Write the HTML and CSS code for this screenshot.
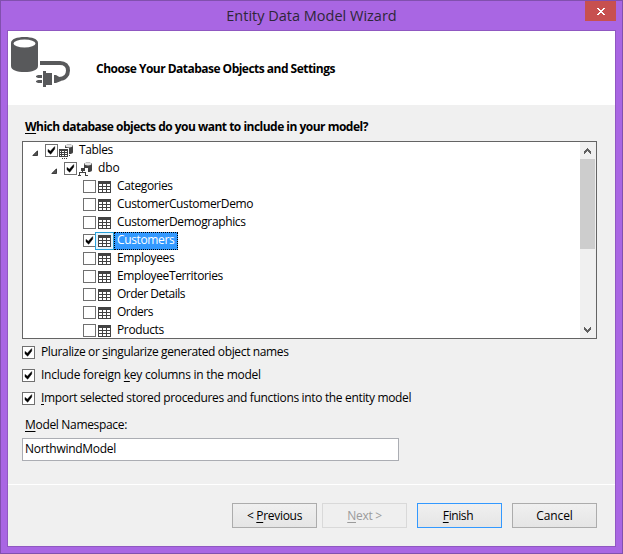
FILE: index.html
```html
<!DOCTYPE html>
<html lang="en">
<head>
<meta charset="utf-8">
<title>Entity Data Model Wizard</title>
<link rel="stylesheet" href="styles.css">
</head>
<body>
<svg class="defs" width="0" height="0" aria-hidden="true">
  <symbol id="check" viewBox="0 0 13 13"><path d="M3 5.4 5.4 7.2 9.7 2.6V5L5.7 10.2 3 7.8Z" fill="#000" stroke="#000" stroke-width=".5"/></symbol>
  <symbol id="arrow" viewBox="0 0 6 6"><path d="M5.5.8V5.5H.8Z" fill="#555" stroke="#222" stroke-width=".8"/></symbol>
  <symbol id="table" viewBox="0 0 13 12" shape-rendering="crispEdges"><path fill="#424242" d="M0 0h13v12H0z"/><path fill="#fff" d="M1 3h3v2H1zM5 3h3v2H5zM9 3h3v2H9zM1 6h3v2H1zM5 6h3v2H5zM9 6h3v2H9zM1 9h3v2H1zM5 9h3v2H5zM9 9h3v2H9z"/></symbol>
</svg>
<div class="window">
  <header class="titlebar">
    <h1 class="title">Entity Data Model Wizard</h1>
    <button class="close" aria-label="Close"><svg width="8" height="7" viewBox="0 0 8 7" shape-rendering="crispEdges"><path fill="#fff" d="M0 0h2v1H0zM6 0h2v1H6zM1 1h2v1H1zM5 1h2v1H5zM2 2h4v1H2zM3 3h2v1H3zM2 4h4v1H2zM1 5h2v1H1zM5 5h2v1H5zM0 6h2v1H0zM6 6h2v1H6z"/></svg></button>
  </header>
  <main class="client">
    <section class="banner">
      <svg class="logo" width="60" height="52" viewBox="0 0 60 52">
        <path fill="#58595b" d="M0 6C0 2 6 0 13.500 0S27 2 27 6v23c0 4-6 6-13.500 6S0 33 0 29z"/>
        <ellipse cx="13.500" cy="6.500" rx="11" ry="4" fill="#fff"/>
        <path fill="none" stroke="#58595b" stroke-width="4" d="M29 26h20c5 0 8 3 8 7.500S54 42 48 42h-3"/>
        <path fill="#58595b" d="M32 34h3v2h6v12h-6v2h-3zM43 38h2l5 3v3l-5 2h-2zM27 38h4v3h-4l-2-1v-1zM27 43h4v3h-4l-2-1v-1z"/>
      </svg>
      <h2 class="heading">Choose Your Database Objects and Settings</h2>
    </section>
    <section class="content">
      <p class="question"><u>W</u>hich database objects do you want to include in your model?</p>
      <div class="tree">
        <ul class="rows">
          <li class="row level-0"><svg class="arrow"><use href="#arrow"/></svg><span class="box"><svg><use href="#check"/></svg></span><svg class="group-icon" width="15" height="15" viewBox="0 0 15 15"><path fill="#424242" d="M6 2c0-2 8-2 8 0v6c0 2-3 2-4 2V4H6z"/><ellipse cx="10" cy="2" rx="3.500" ry="1.400" fill="#e4e4e4"/><g shape-rendering="crispEdges"><path fill="#424242" d="M0 5h9v8H0z"/><path fill="#fff" d="M1 7h1v1H1zM3 7h2v1H3zM6 7h2v1H6zM1 9h1v1H1zM3 9h2v1H3zM6 9h2v1H6zM1 11h1v1H1zM3 11h2v1H3zM6 11h2v1H6z"/><path fill="#424242" d="M3 14h1v1H3zM5 14h1v1H5zM7 14h1v1H7zM10 11h1v1h-1z"/></g></svg><span class="name">Tables</span></li>
          <li class="row level-1"><svg class="arrow"><use href="#arrow"/></svg><span class="box"><svg><use href="#check"/></svg></span><svg class="group-icon" width="15" height="15" viewBox="0 0 15 15"><path fill="#424242" d="M6 2c0-2 8-2 8 0v6c0 2-3 2-4 2V6H6z"/><ellipse cx="10" cy="2" rx="3.500" ry="1.400" fill="#e4e4e4"/><path shape-rendering="crispEdges" fill="#424242" d="M3 6h4v3H5v1h3v3h2v1H7v-3H2v2h1v1H0v-1h1v-3h3V9H3z"/></svg><span class="name w-dbo">dbo</span></li>
          <li class="row level-2"><span class="box"></span><svg class="table"><use href="#table"/></svg><span class="name">Categories</span></li>
          <li class="row level-2"><span class="box"></span><svg class="table"><use href="#table"/></svg><span class="name">CustomerCustomerDemo</span></li>
          <li class="row level-2"><span class="box"></span><svg class="table"><use href="#table"/></svg><span class="name">CustomerDemographics</span></li>
          <li class="row level-2 selected"><span class="box"><svg><use href="#check"/></svg></span><svg class="table"><use href="#table"/></svg><span class="name">Customers</span></li>
          <li class="row level-2"><span class="box"></span><svg class="table"><use href="#table"/></svg><span class="name">Employees</span></li>
          <li class="row level-2"><span class="box"></span><svg class="table"><use href="#table"/></svg><span class="name">EmployeeTerritories</span></li>
          <li class="row level-2"><span class="box"></span><svg class="table"><use href="#table"/></svg><span class="name w-tight">Order Details</span></li>
          <li class="row level-2"><span class="box"></span><svg class="table"><use href="#table"/></svg><span class="name w-tight">Orders</span></li>
          <li class="row level-2"><span class="box"></span><svg class="table"><use href="#table"/></svg><span class="name">Products</span></li>
        </ul>
        <div class="scrollbar">
          <svg class="chevron" viewBox="0 0 7 6" shape-rendering="crispEdges"><path fill="#606060" d="M3 0h1v1h1v1h1v1h1v3H6V5H5V4H4V3H3v1H2v1H1v1H0V3h1V2h1V1h1z"/></svg>
          <div class="thumb"></div>
          <svg class="chevron down" viewBox="0 0 7 6" shape-rendering="crispEdges"><path fill="#606060" d="M3 6h1V5h1V4h1V3h1V0H6v1H5v1H4v1H3V2H2V1H1V0H0v3h1v1h1v1h1z"/></svg>
        </div>
      </div>
      <div class="options">
        <div class="option"><span class="box"><svg><use href="#check"/></svg></span><span class="w-plural">Pluralize or <u>s</u>ingularize generated object names</span></div>
        <div class="option"><span class="box"><svg><use href="#check"/></svg></span><span class="w-include">Include foreign <u>k</u>ey columns in the model</span></div>
        <div class="option"><span class="box"><svg><use href="#check"/></svg></span><span class="w-import"><u>I</u>mport selected stored procedures and functions into the entity model</span></div>
      </div>
      <div class="namespace-label"><u>M</u>odel Namespace:</div>
      <div class="field">NorthwindModel</div>
    </section>
    <footer class="footer">
      <button class="button">&lt; <u>P</u>revious</button>
      <button class="button disabled"><u>N</u>ext &gt;</button>
      <button class="button primary"><u>F</u>inish</button>
      <button class="button cancel">Cancel</button>
    </footer>
  </main>
</div>
</body>
</html>
```
FILE: styles.css
```css
* { box-sizing: border-box; margin: 0; padding: 0; }
body { width: 623px; height: 554px; overflow: hidden; font: 12px/18px "Open Sans", "Noto Sans", sans-serif; color: #000; }
.defs { position: absolute; }
svg { display: block; flex: none; }
u { text-decoration-thickness: 1px; text-underline-offset: 2px; text-decoration-skip-ink: none; }
.window { width: 623px; height: 554px; padding: 0 6px 6px; background: #a966e3; border: 1px solid #8150ae; display: flex; flex-direction: column; }
.titlebar { height: 29px; display: flex; flex: none; }
.title { flex: 1; padding-left: 31px; text-align: center; font-size: 14.5px; line-height: 29px; font-weight: 400; color: #2e2638; }
.close { width: 31px; height: 20px; border: 0; background: #c75050; display: flex; align-items: center; justify-content: center; }
.client { width: 609px; height: 517px; border: 1px solid #9058c2; background: #f0f0f0; }
.banner { height: 74px; background: #fff; display: flex; align-items: flex-start; padding: 6px 0 0 3px; }
.heading { font-size: 12px; line-height: 18px; font-weight: 700; margin: 23px 0 0 25px; letter-spacing: -.52px; white-space: nowrap; }
.content { height: 379px; padding: 13px 18px 0 14px; }
.question { font-weight: 700; padding-left: 3px; letter-spacing: -.51px; white-space: nowrap; }
.tree { margin-top: 5px; width: 575px; height: 198px; border: 1px solid #646464; background: #fff; display: flex; justify-content: space-between; overflow: hidden; }
.rows { list-style: none; flex: 1; }
.row { height: 18px; display: flex; align-items: center; white-space: nowrap; }
.level-0 { padding-left: 9px; }
.level-1 { padding-left: 28px; }
.level-2 { padding-left: 60px; }
.arrow { width: 6px; height: 6px; margin: 4px 7px 0 0; }
.box { width: 13px; height: 13px; flex: none; border: 1px solid #707070; background: #fff; }
.row .box { margin-top: -1px; }
.box svg { width: 13px; height: 13px; margin: -1px; }
.group-icon { margin: 1px 5px 0 1px; }
.table { width: 13px; height: 12px; margin: 0 6px 0 2px; }
.name { height: 18px; line-height: 15px; letter-spacing: -.37px; }
.w-dbo { letter-spacing: -.1px; }
.w-tight { letter-spacing: -.5px; }
.w-plural { letter-spacing: -.36px; }
.w-include { letter-spacing: -.26px; }
.w-import { letter-spacing: -.34px; }
.selected .name { background: #3399ff; color: #fff; outline: 1px dotted #000; outline-offset: -1px; width: 64px; padding-left: 3px; margin-left: -3px; }
.selected .table { outline: 1px solid #26a0da; box-shadow: 0 0 0 2px #e5f3fb; outline-offset: 2px; }
.scrollbar { width: 16px; background: #f0f0f0; display: flex; flex-direction: column; padding: 6px 0 5px; }
.chevron { width: 7px; height: 6px; margin-left: 4px; }
.thumb { width: 15px; height: 90px; margin-top: 5px; background: #cdcdcd; }
.down { margin-top: auto; }
.options { padding-top: 4px; display: flex; flex-direction: column; gap: 5px; }
.option { height: 18px; display: flex; align-items: center; gap: 6px; white-space: nowrap; }
.namespace-label { padding: 9px 0 0 3px; letter-spacing: -.32px; }
.field { width: 377px; height: 23px; margin-top: 4px; border: 1px solid #abadb3; background: #fff; line-height: 20px; padding-left: 2px; letter-spacing: -.28px; }
.footer { height: 62px; border-top: 1px solid #fff; padding: 18px 18px 0 0; display: flex; justify-content: flex-end; }
.button { width: 85px; height: 25px; margin-left: 5px; border: 1px solid #acacac; background: linear-gradient(#f0f0f0, #e5e5e5); font: inherit; color: #000; white-space: nowrap; letter-spacing: -.3px; }
.button.disabled { color: #9b9b9b; border-color: #d9d9d9; background: #efefef; }
.button.primary { border-color: #3399ff; margin-left: 10px; padding-right: 3px; letter-spacing: -.4px; }
.button.cancel { margin-left: 10px; letter-spacing: -.1px; }
```
